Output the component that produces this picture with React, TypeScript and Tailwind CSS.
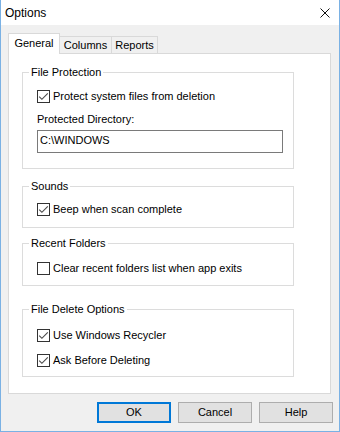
import React from "react";

function Check({ checked, label }: { checked: boolean; label: string }) {
  return (
    <div className="flex items-center gap-[3px] h-[13px]">
      <svg width="13" height="13" viewBox="0 0 13 13" className="shrink-0">
        <rect x="0.5" y="0.5" width="12" height="12" fill="#ffffff" stroke="#333333" />
        {checked && (
          <polyline
            points="2.2,6.6 4.9,9.3 10.8,3.3"
            fill="none"
            stroke="#4a4a4a"
            strokeWidth="1.15"
          />
        )}
      </svg>
      <span className="leading-[13px] whitespace-nowrap">{label}</span>
    </div>
  );
}

function Group({
  title,
  className,
  children,
}: {
  title: string;
  className: string;
  children: React.ReactNode;
}) {
  return (
    <div className={"relative w-[272px] border border-[#dcdcdc] pl-[14px] " + className}>
      <span className="absolute left-[6px] -top-[7px] px-[2px] bg-white leading-[13px] whitespace-nowrap">
        {title}
      </span>
      {children}
    </div>
  );
}

export default function App() {
  return (
    <div className="w-[340px] h-[432px] flex flex-col bg-[#f0f0f0] border-x border-b border-[#7ab1e4] font-['Liberation_Sans',Arial,sans-serif] text-[11px] text-black">
      <div className="h-[25px] shrink-0 bg-white flex items-center justify-between pl-[4px] pr-[9px]">
        <span className="text-[12px] leading-[14px]">Options</span>
        <svg width="10" height="10" viewBox="0 0 10 10">
          <path d="M0.5 0.5 L9.5 9.5 M9.5 0.5 L0.5 9.5" stroke="#111111" strokeWidth="1" />
        </svg>
      </div>

      <div className="flex items-end mt-[8px] ml-[7px] h-[20px]">
        <div className="relative z-10 -mb-px w-[52px] h-[21px] bg-white border-x border-t border-[#d9d9d9] text-center pt-[3px] leading-[13px]">
          General
        </div>
        <div className="w-[52px] h-[17px] bg-[#f0f0f0] border-t border-r border-[#d9d9d9] text-center pt-[2px] leading-[13px]">
          Columns
        </div>
        <div className="w-[46px] h-[17px] bg-[#f0f0f0] border-t border-r border-[#d9d9d9] text-center pt-[2px] leading-[13px]">
          Reports
        </div>
      </div>

      <div className="ml-[7px] w-[323px] h-[341px] shrink-0 bg-white border border-[#d9d9d9] pl-[13px] pt-[18px] flex flex-col">
        <Group title="File Protection" className="h-[97px] pt-[17px]">
          <Check checked label="Protect system files from deletion" />
          <div className="mt-[10px] leading-[13px]">Protected Directory:</div>
          <div className="mt-[4px] w-[246px] h-[23px] border border-[#7a7a7a] bg-white flex items-center pl-[2px] pb-[2px]">
            <span className="leading-[13px]">C:\WINDOWS</span>
          </div>
        </Group>

        <Group title="Sounds" className="mt-[17px] h-[42px] pt-[16px]">
          <Check checked label="Beep when scan complete" />
        </Group>

        <Group title="Recent Folders" className="mt-[15px] h-[43px] pt-[18px]">
          <Check checked={false} label="Clear recent folders list when app exits" />
        </Group>

        <Group title="File Delete Options" className="mt-[23px] h-[68px] pt-[19px]">
          <Check checked label="Use Windows Recycler" />
          <div className="mt-[12px]">
            <Check checked label="Ask Before Deleting" />
          </div>
        </Group>
      </div>

      <div className="flex justify-end gap-[7px] mt-[8px] pr-[6px]">
        <button className="w-[74px] h-[21px] bg-[#e1e1e1] border-2 border-[#0078d7] flex items-center justify-center leading-[13px]">
          OK
        </button>
        <button className="w-[74px] h-[21px] bg-[#e1e1e1] border border-[#adadad] flex items-center justify-center leading-[13px]">
          Cancel
        </button>
        <button className="w-[74px] h-[21px] bg-[#e1e1e1] border border-[#adadad] flex items-center justify-center leading-[13px]">
          Help
        </button>
      </div>
    </div>
  );
}
